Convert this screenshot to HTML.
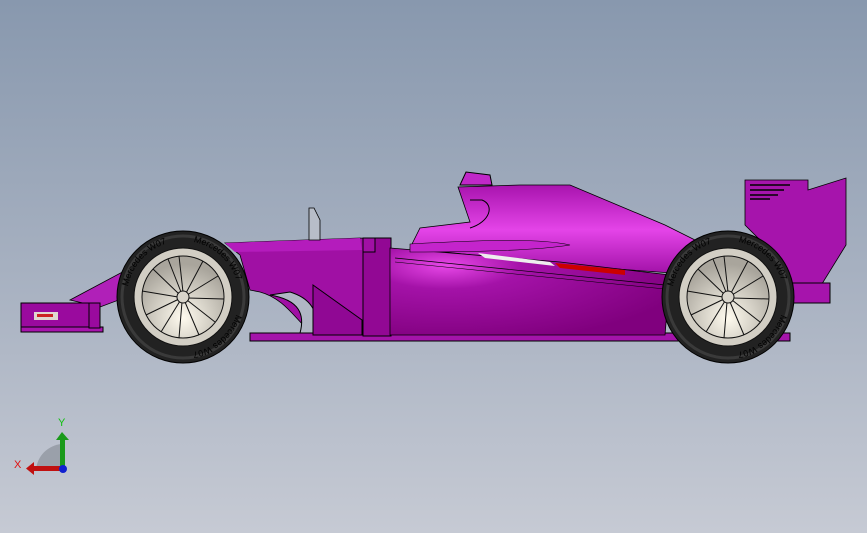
<!DOCTYPE html>
<html><head><meta charset="utf-8"><style>
html,body{margin:0;padding:0;width:867px;height:533px;overflow:hidden}
body{background:linear-gradient(#8898ae 0%,#a6b0c0 50%,#c6cad4 100%)}
svg{position:absolute;left:0;top:0}
</style></head><body>
<svg width="867" height="533" viewBox="0 0 867 533" xmlns="http://www.w3.org/2000/svg">
<defs>
<radialGradient id="pod" cx="0.2" cy="0.2" r="0.9">
<stop offset="0" stop-color="#e848e8"/><stop offset="0.3" stop-color="#a412a8"/><stop offset="1" stop-color="#80007e"/>
</radialGradient>
<linearGradient id="cover" x1="0" y1="0" x2="0" y2="1">
<stop offset="0" stop-color="#a814ae"/><stop offset="0.5" stop-color="#e444e8"/><stop offset="1" stop-color="#a010a6"/>
</linearGradient>
<radialGradient id="rim" cx="0.5" cy="0.75" r="0.65">
<stop offset="0" stop-color="#fffbef"/><stop offset="1" stop-color="#a9a59c"/>
</radialGradient>
<g id="wheel">
<circle r="66" fill="#222" stroke="#000"/>
<circle r="61" fill="none" stroke="#3a3a3a" stroke-width="3"/>
<path id="tp" d="M-56,0 A56,56 0 1,1 56,0 A56,56 0 1,1 -56,0" fill="none"/>
<text font-family="Liberation Sans,sans-serif" font-size="9" fill="#000"><textPath href="#tp" startOffset="3%">Mercedes W07</textPath></text>
<text font-family="Liberation Sans,sans-serif" font-size="9" fill="#000"><textPath href="#tp" startOffset="28%">Mercedes W07</textPath></text>
<text font-family="Liberation Sans,sans-serif" font-size="9" fill="#000"><textPath href="#tp" startOffset="55%">Mercedes W07</textPath></text>
<circle r="49" fill="#d2cec4" stroke="#111"/>
<circle r="41" fill="url(#rim)" stroke="#111"/>
<g stroke="#111" stroke-width="1">
<line x1="0" y1="-5" x2="-4" y2="-41"/><line x1="3" y1="-4" x2="20" y2="-36"/>
<line x1="4" y1="-2" x2="35" y2="-21"/><line x1="5" y1="1" x2="41" y2="2"/>
<line x1="4" y1="3" x2="32" y2="25"/><line x1="2" y1="5" x2="16" y2="38"/>
<line x1="-1" y1="5" x2="-4" y2="41"/><line x1="-3" y1="4" x2="-22" y2="35"/>
<line x1="-4" y1="2" x2="-37" y2="18"/><line x1="-5" y1="0" x2="-41" y2="-6"/>
<line x1="-4" y1="-3" x2="-30" y2="-28"/><line x1="-2" y1="-5" x2="-15" y2="-38"/>
</g>
<circle r="6" fill="#d8d4ca" stroke="#111"/>
</g>
</defs>

<!-- front wing -->
<path d="M70,300 L130,268 L220,245 L225,260 L140,292 L100,307 Z" fill="#b020b8" stroke="#000" stroke-width="0.8"/>
<rect x="21" y="303" width="68" height="26" fill="#9a0a9e" stroke="#000"/>
<rect x="21" y="327" width="82" height="5" fill="#a814ae" stroke="#000"/>
<rect x="34" y="312" width="24" height="8" fill="#e0d6d0"/>
<rect x="37" y="314" width="16" height="3" fill="#cc2222"/>
<path d="M89,303 L100,303 L100,328 L89,328 Z" fill="#9a0a9e" stroke="#000"/>

<!-- floor -->
<path d="M250,333 L790,333 L790,341 L250,341 Z" fill="#a414aa" stroke="#000"/>
<!-- front body / nose -->
<path d="M225,243 L360,238 L390,240 L390,335 L318,335 C300,330 290,300 260,292 L250,290 L240,255 Z" fill="#a010a4" stroke="#000" stroke-width="0.8"/>
<path d="M225,243 L360,238 L362,250 L235,252 Z" fill="#b41cbc"/>
<path d="M270,295 C300,300 305,315 300,333 L318,333 C318,310 310,298 290,292 Z" fill="#b0b6c4" stroke="#000"/>
<!-- bargeboard triangle -->
<path d="M313,285 L362,320 L362,335 L313,335 Z" fill="#900894" stroke="#000"/>
<!-- halo mirror -->
<path d="M309,208 L314,208 L320,220 L320,240 L309,240 Z" fill="#b7bdc8" stroke="#000" stroke-width="0.8"/>
<!-- sidepod inlet column -->
<rect x="363" y="238" width="28" height="98" fill="#920894" stroke="#000"/>
<rect x="363" y="238" width="12" height="14" fill="#a010a4" stroke="#000"/>
<!-- engine cover -->
<path d="M458,187 L520,185 L570,185 L665,225 L705,245 L700,275 L560,265 L410,248 L420,228 L470,222 Z" fill="url(#cover)" stroke="#000" stroke-width="0.8"/>
<path d="M460,185 L492,185 L490,175 L466,172 Z" fill="#c028c8" stroke="#000"/>
<path d="M470,228 C490,222 495,205 482,200 L470,200" fill="none" stroke="#000"/>
<!-- sidepod -->
<path d="M390,248 L560,262 L670,275 L665,335 L390,335 Z" fill="url(#pod)" stroke="#000" stroke-width="0.8"/>
<path d="M410,244 C480,240 540,238 570,245 C540,250 480,252 410,252 Z" fill="#c424cc" stroke="#000" stroke-width="0.6"/>
<path d="M478,253 L550,262 L555,266 L485,258 Z" fill="#eeeeee"/>
<path d="M555,263 L625,270 L625,275 L560,268 Z" fill="#cc0000"/>
<line x1="395" y1="258" x2="665" y2="285" stroke="#000" stroke-width="0.7"/>
<line x1="395" y1="262" x2="665" y2="289" stroke="#000" stroke-width="0.5"/>

<!-- rear wing -->
<path d="M745,180 L808,180 L808,190 L846,178 L846,245 L812,300 L790,300 L770,250 L745,225 Z" fill="#a614ac" stroke="#000" stroke-width="0.8"/>
<g stroke="#000" stroke-width="1.5"><line x1="750" y1="185" x2="790" y2="185"/><line x1="750" y1="190" x2="784" y2="190"/><line x1="750" y1="195" x2="778" y2="195"/><line x1="750" y1="199" x2="770" y2="199"/></g>
<rect x="790" y="283" width="40" height="20" fill="#a614ac" stroke="#000"/>

<use href="#wheel" x="183" y="297"/>
<use href="#wheel" x="728" y="297"/>

<!-- triad -->
<path d="M36,470 A28,28 0 0,1 62,444 L62,470 Z" fill="#9aa0aa"/>
<rect x="60" y="438" width="5" height="32" fill="#1a9a1a"/>
<path d="M56,440 L62,432 L69,440 Z" fill="#1a9a1a"/>
<rect x="32" y="466" width="30" height="5" fill="#c01010"/>
<path d="M34,462 L26,468.5 L34,475 Z" fill="#c01010"/>
<circle cx="63" cy="469" r="4" fill="#1020d0"/>
<text x="58" y="426" font-family="Liberation Sans,sans-serif" font-size="11" fill="#10c010">Y</text>
<text x="14" y="468" font-family="Liberation Sans,sans-serif" font-size="11" fill="#e01010">X</text>
</svg>
</body></html>
